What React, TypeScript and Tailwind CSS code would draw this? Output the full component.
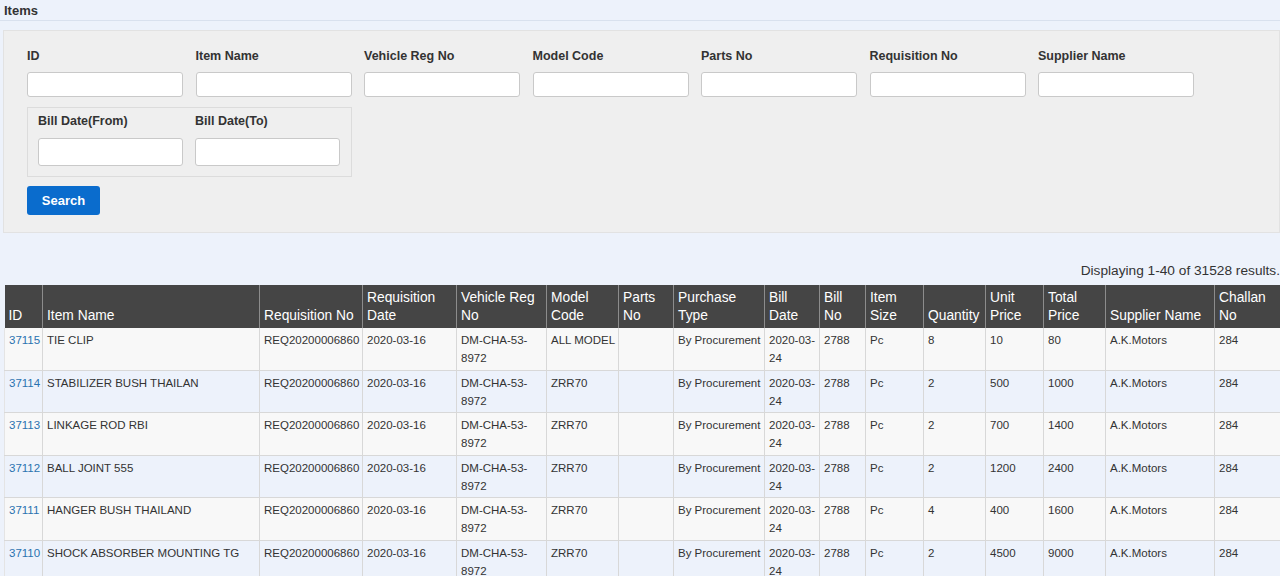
import React from 'react';

interface Row {
    id: string;
    name: string;
    model: string;
    qty: string;
    unit: string;
    total: string;
}

const rows: Row[] = [
    { id: '37115', name: 'TIE CLIP', model: 'ALL MODEL', qty: '8', unit: '10', total: '80' },
    { id: '37114', name: 'STABILIZER BUSH THAILAN', model: 'ZRR70', qty: '2', unit: '500', total: '1000' },
    { id: '37113', name: 'LINKAGE ROD RBI', model: 'ZRR70', qty: '2', unit: '700', total: '1400' },
    { id: '37112', name: 'BALL JOINT 555', model: 'ZRR70', qty: '2', unit: '1200', total: '2400' },
    { id: '37111', name: 'HANGER BUSH THAILAND', model: 'ZRR70', qty: '4', unit: '400', total: '1600' },
    { id: '37110', name: 'SHOCK ABSORBER MOUNTING TG', model: 'ZRR70', qty: '2', unit: '4500', total: '9000' },
];

const columns: { label: React.ReactNode; width: string }[] = [
    { label: 'ID', width: 'w-[38px]' },
    { label: 'Item Name', width: 'w-[217px]' },
    { label: 'Requisition No', width: 'w-[103px]' },
    { label: <>Requisition<br />Date</>, width: 'w-[94px]' },
    { label: <>Vehicle Reg<br />No</>, width: 'w-[90px]' },
    { label: <>Model<br />Code</>, width: 'w-[72px]' },
    { label: <>Parts<br />No</>, width: 'w-[55px]' },
    { label: <>Purchase<br />Type</>, width: 'w-[91px]' },
    { label: <>Bill<br />Date</>, width: 'w-[55px]' },
    { label: <>Bill<br />No</>, width: 'w-[46px]' },
    { label: <>Item<br />Size</>, width: 'w-[58px]' },
    { label: 'Quantity', width: 'w-[62px]' },
    { label: <>Unit<br />Price</>, width: 'w-[58px]' },
    { label: <>Total<br />Price</>, width: 'w-[62px]' },
    { label: 'Supplier Name', width: 'w-[109px]' },
    { label: <>Challan<br />No</>, width: 'w-[70px]' },
];

const filters = ['ID', 'Item Name', 'Vehicle Reg No', 'Model Code', 'Parts No', 'Requisition No', 'Supplier Name'];

const Field = ({ label, wide }: { label: string; wide?: boolean }) => (
    <div className={wide ? 'w-[156px]' : 'w-[145px]'}>
        <div className="text-[12.5px] font-bold leading-4 text-[#333]">{label}</div>
        <input
            type="text"
            className={`block w-full rounded-[3px] border border-[#c9c9c9] bg-white ${wide ? 'mt-2 h-[25px]' : 'mt-[9px] h-[28px]'}`}
        />
    </div>
);

export default function App() {
    const td = 'border-r border-b border-[#d8d8d8] px-[4px] pt-[3px] pb-[2.6px] align-top leading-[18px]';

    return (
        <div className="h-[576px] overflow-hidden bg-[#edf2fb] text-[#333]" style={{ fontFamily: '"Liberation Sans", Arial, sans-serif' }}>
            <div className="border-b border-[#d9e1ee] px-[4px] pt-[3px] pb-[1px] text-[13px] font-bold leading-4">Items</div>

            <div className="mt-[9px] ml-[3px] border border-[#e2e2e2] bg-[#efefef] pl-[23px] pt-[17px] pb-[17px]">
                <div className="flex gap-[12.5px]">
                    {filters.map((f) => (
                        <Field key={f} label={f} wide />
                    ))}
                </div>

                <div className="mt-[10px] flex w-[325px] gap-[12px] border border-[#dcdcdc] pl-[10px] pt-[5px] pb-[10px]">
                    <Field label="Bill Date(From)" />
                    <Field label="Bill Date(To)" />
                </div>

                <button className="mt-[9px] h-[29px] w-[73px] rounded-[3px] bg-[#0a6ccd] text-[13px] font-bold text-white">
                    Search
                </button>
            </div>

            <div className="mt-[30px] whitespace-nowrap text-right text-[13.7px] leading-4 text-[#333]">Displaying 1-40 of 31528 results.</div>

            <div className="mt-[6px] ml-[4px] w-[1280px]">
                <table className="w-[1280px] table-fixed border-collapse text-left text-[11.5px]">
                    <colgroup>
                        {columns.map((c, i) => (
                            <col key={i} className={c.width} />
                        ))}
                    </colgroup>
                    <thead>
                        <tr className="h-[43px] bg-[#454545] text-[13.8px] text-white">
                            {columns.map((c, i) => (
                                <th
                                    key={i}
                                    className={`border-r border-[#8c8c8c] px-[4px] pt-[3px] pb-[3px] align-bottom font-normal leading-[18px] whitespace-nowrap ${i === columns.length - 1 ? 'rounded-tr-[5px]' : ''}`}
                                >
                                    {c.label}
                                </th>
                            ))}
                        </tr>
                    </thead>
                    <tbody>
                        {rows.map((r, i) => (
                            <tr key={r.id} className={i % 2 === 0 ? 'bg-[#f8f8f8]' : 'bg-[#edf2fb]'}>
                                <td className={`${td} border-l border-l-[#e4e4e4] text-[#2a72b0]`}>{r.id}</td>
                                <td className={td}>{r.name}</td>
                                <td className={`${td} whitespace-nowrap`}>REQ20200006860</td>
                                <td className={td}>2020-03-16</td>
                                <td className={td}>DM-CHA-53-8972</td>
                                <td className={`${td} whitespace-nowrap`}>{r.model}</td>
                                <td className={td}></td>
                                <td className={`${td} whitespace-nowrap`}>By Procurement</td>
                                <td className={td}>
                                    <span className="whitespace-nowrap">2020-03-</span>
                                    <wbr />
                                    24
                                </td>
                                <td className={td}>2788</td>
                                <td className={td}>Pc</td>
                                <td className={td}>{r.qty}</td>
                                <td className={td}>{r.unit}</td>
                                <td className={td}>{r.total}</td>
                                <td className={td}>A.K.Motors</td>
                                <td className={td}>284</td>
                            </tr>
                        ))}
                    </tbody>
                </table>
            </div>
        </div>
    );
}
